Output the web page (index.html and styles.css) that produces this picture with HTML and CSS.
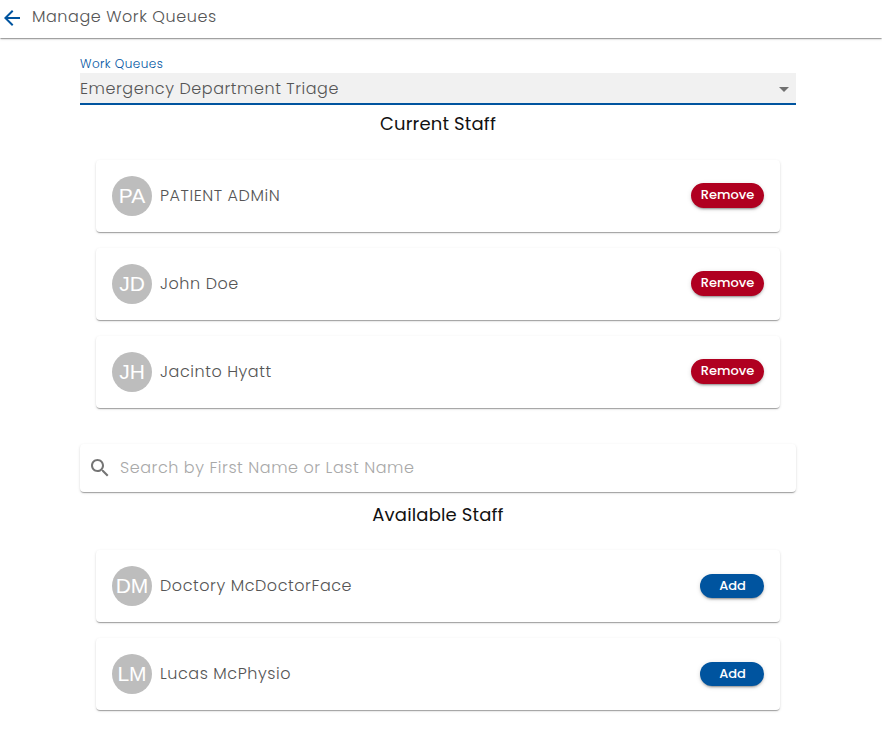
FILE: index.html
```html
<!DOCTYPE html>
<html lang="en">
<head>
<meta charset="utf-8">
<title>Manage Work Queues</title>
<link rel="stylesheet" href="styles.css">
</head>
<body>
<header class="topbar">
  <svg class="back" viewBox="0 0 24 24"><path d="M20 11H7.83l5.59-5.59L12 4l-8 8 8 8 1.41-1.41L7.83 13H20v-2z"/></svg>
  <h1 class="title">Manage Work Queues</h1>
</header>
<main class="content">
  <label class="label">Work Queues</label>
  <div class="select">
    <span class="select-value">Emergency Department Triage</span>
    <svg class="caret" viewBox="0 0 24 24"><path d="M7 10l5 5 5-5z"/></svg>
  </div>
  <h2 class="heading">Current Staff</h2>
  <ul class="staff">
    <li class="card"><span class="avatar">PA</span><span class="name">PATIENT ADMiN</span><button class="btn remove">Remove</button></li>
    <li class="card"><span class="avatar">JD</span><span class="name">John Doe</span><button class="btn remove">Remove</button></li>
    <li class="card"><span class="avatar">JH</span><span class="name">Jacinto Hyatt</span><button class="btn remove">Remove</button></li>
  </ul>
  <div class="search">
    <svg class="search-icon" viewBox="0 0 24 24"><path d="M15.5 14h-.79l-.28-.27C15.41 12.59 16 11.11 16 9.5 16 5.91 13.09 3 9.5 3S3 5.91 3 9.5 5.91 16 9.5 16c1.61 0 3.09-.59 4.23-1.57l.27.28v.79l5 4.99L20.49 19l-4.99-5zm-6 0C7.01 14 5 11.99 5 9.5S7.01 5 9.5 5 14 7.01 14 9.5 11.99 14 9.5 14z"/></svg>
    <span class="placeholder">Search by First Name or Last Name</span>
  </div>
  <h2 class="heading available">Available Staff</h2>
  <ul class="staff">
    <li class="card"><span class="avatar">DM</span><span class="name">Doctory McDoctorFace</span><button class="btn add">Add</button></li>
    <li class="card"><span class="avatar">LM</span><span class="name">Lucas McPhysio</span><button class="btn add">Add</button></li>
  </ul>
</main>
</body>
</html>
```

FILE: styles.css
```css
* { box-sizing: border-box; }
body {
  margin: 0;
  background: #fff;
  color: #555;
  font: 300 16px/24px Poppins, Inter, "Open Sans", sans-serif;
  letter-spacing: .55px;
}
h1, h2, ul { margin: 0; padding: 0; font: inherit; list-style: none; }
svg { display: block; flex: none; }

.topbar {
  display: flex;
  height: 38px;
  padding: 5px 0 0;
  box-shadow: 0 2px 1px -1px rgba(0,0,0,.2), 0 1px 1px rgba(0,0,0,.14), 0 1px 3px rgba(0,0,0,.12);
}
.back { width: 24px; height: 24px; margin: 1px 8px 0 0; fill: #00549f; }

.content { width: 716px; margin: 18px 0 0 80px; padding-bottom: 20px; }
.label { display: block; height: 17px; font-size: 12px; line-height: 16px; color: #00549f; letter-spacing: .45px; }
.select {
  display: flex;
  justify-content: space-between;
  height: 32px;
  padding-top: 4px;
  background: #f1f1f1;
  border-bottom: 2px solid #00549f;
}
.caret { width: 24px; height: 24px; fill: #707070; }
.heading {
  height: 39px;
  padding-top: 3px;
  line-height: 32px;
  font-size: 18px;
  font-weight: 400;
  letter-spacing: .15px;
  color: #111;
  text-align: center;
}
.available { height: 42px; padding-top: 7px; }

.staff { display: grid; gap: 16px; padding: 16px 16px 0; }
.card, .search {
  display: flex;
  align-items: center;
  background: #fff;
  border-radius: 4px;
  box-shadow: 0 2px 1px -1px rgba(0,0,0,.2), 0 1px 1px rgba(0,0,0,.14), 0 1px 3px rgba(0,0,0,.12);
}
.card { height: 72px; padding: 0 16px; }
.avatar {
  width: 40px; height: 40px;
  margin-right: 8px;
  border-radius: 50%;
  background: #bdbdbd;
  color: #fff;
  font: 400 21px/40px "Liberation Sans", Arial, sans-serif;
  letter-spacing: 0;
  text-align: center;
}
.name { flex: 1; }
.btn {
  height: 25px;
  margin-bottom: 1px;
  padding: 0 0 2px;
  border: 0;
  border-radius: 13px;
  color: #fff;
  font: 500 13px/23px Poppins, Inter, sans-serif;
  letter-spacing: 0;
  box-shadow: 0 3px 1px -2px rgba(0,0,0,.2), 0 2px 2px rgba(0,0,0,.14), 0 1px 5px rgba(0,0,0,.12);
}
.remove { width: 73px; background: #b00020; }
.add { width: 64px; height: 24px; margin-bottom: 0; padding-left: 1px; background: #00549f; }
.search { height: 48px; margin-top: 36px; padding-left: 8px; }
.search-icon { width: 24px; height: 24px; margin-right: 8px; fill: #757575; }
.placeholder { color: #a8a8a8; }
```
